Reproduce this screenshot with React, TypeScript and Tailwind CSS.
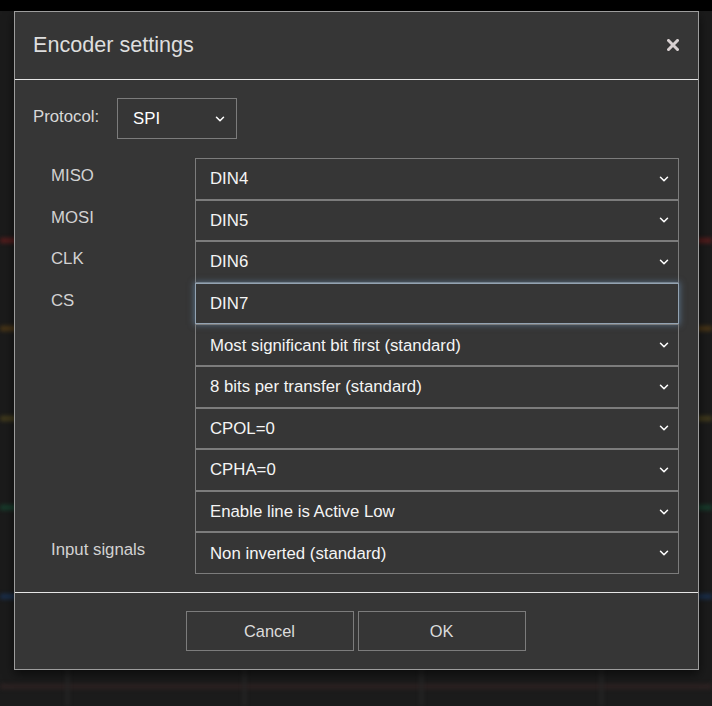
import { ChevronDown } from "lucide-react";

const rows = [
  { label: "MISO", value: "DIN4" },
  { label: "MOSI", value: "DIN5" },
  { label: "CLK", value: "DIN6" },
  { label: "CS", value: "DIN7", focused: true },
  { label: "", value: "Most significant bit first (standard)" },
  { label: "", value: "8 bits per transfer (standard)" },
  { label: "", value: "CPOL=0" },
  { label: "", value: "CPHA=0" },
  { label: "", value: "Enable line is Active Low" },
  { label: "Input signals", value: "Non inverted (standard)" },
];

const traces = [
  { top: "top-[238px]", color: "bg-[#5a1c1c]" },
  { top: "top-[326px]", color: "bg-[#4d3816]" },
  { top: "top-[416px]", color: "bg-[#463e1c]" },
  { top: "top-[505px]", color: "bg-[#17402e]" },
  { top: "top-[594px]", color: "bg-[#1a3050]" },
  { top: "top-[684px]", color: "bg-[#2e2222]" },
];

const SelectRow = ({ label, value, focused }: any) => {
  return (
    <div className="flex items-start">
      <div className="w-[144px] shrink-0 pt-[8px] text-[16.8px] leading-[20px] text-[#d2d2d2]">
        {label}
      </div>
      <div
        className={`flex h-[41.6px] flex-1 items-center justify-between border pl-[14px] pr-[7px] text-[16.8px] text-[#f4f4f4] ${
          focused
            ? "border-[#93a3b2] shadow-[0_0_6px_1px_rgba(110,150,190,0.55)]"
            : "border-[#7c7c7c]"
        }`}
      >
        <span>{value}</span>
        {!focused && (
          <ChevronDown size={14} strokeWidth={2.6} className="text-white" />
        )}
      </div>
    </div>
  );
};

export default function App() {
  return (
    <div
      className="relative h-[706px] w-full overflow-hidden bg-[#1b1b1b]"
      style={{ fontFamily: '"Liberation Sans", Arial, sans-serif' }}
    >
      {/* app behind the modal */}
      <div className="absolute inset-x-0 top-0 h-[11px] bg-black" />
      {traces.map((t, i) => (
        <div
          key={i}
          className={`absolute inset-x-0 h-[5px] blur-[2px] ${t.top} ${t.color}`}
        />
      ))}
      {[66, 243, 420, 600].map((x) => (
        <div
          key={x}
          className="absolute bottom-0 h-[40px] w-[3px] bg-[#262626] blur-[2px]"
          style={{ left: x }}
        />
      ))}

      <div className="relative pl-[14px] pt-[11px]">
        <div className="flex h-[659px] w-[685px] flex-col border border-[#9d9d9d] bg-[#363636] shadow-[0_4px_10px_rgba(0,0,0,0.6)]">
          <div className="flex h-[68px] shrink-0 items-center justify-between border-b border-[#e6e6e6] pl-[18px] pr-[19px]">
            <div className="text-[21.6px] text-[#dedede]">Encoder settings</div>
            <svg width="12" height="12" viewBox="0 0 12 12" className="mb-[2px]">
              <path
                d="M1.5 1.5L10.5 10.5M10.5 1.5L1.5 10.5"
                stroke="#d8d0d1"
                strokeWidth="3"
                strokeLinecap="square"
              />
            </svg>
          </div>

          <div className="flex flex-1 flex-col pl-[36px] pr-[19px] pt-[18px]">
            <div className="-ml-[18px] flex items-center gap-[17px]">
              <span className="mb-[4px] w-[67px] text-[16.8px] text-[#d8d8d8]">
                Protocol:
              </span>
              <div className="flex h-[41px] w-[120px] items-center justify-between border border-[#7c7c7c] pl-[15px] pr-[9px] text-[16.8px] text-white">
                <span>SPI</span>
                <ChevronDown size={14} strokeWidth={2.6} className="text-white" />
              </div>
            </div>

            <div className="mt-[19px] flex flex-col">
              {rows.map((r) => (
                <SelectRow key={r.value} {...r} />
              ))}
            </div>
          </div>

          <div className="flex h-[77px] shrink-0 items-center justify-center gap-[4px] border-t border-[#e6e6e6] pr-[2px]">
            <button className="h-[40px] w-[168px] border border-[#7c7c7c] text-[16.4px] text-[#dcdcdc]">
              Cancel
            </button>
            <button className="h-[40px] w-[168px] border border-[#7c7c7c] text-[16.4px] text-[#dcdcdc]">
              OK
            </button>
          </div>
        </div>
      </div>
    </div>
  );
}
